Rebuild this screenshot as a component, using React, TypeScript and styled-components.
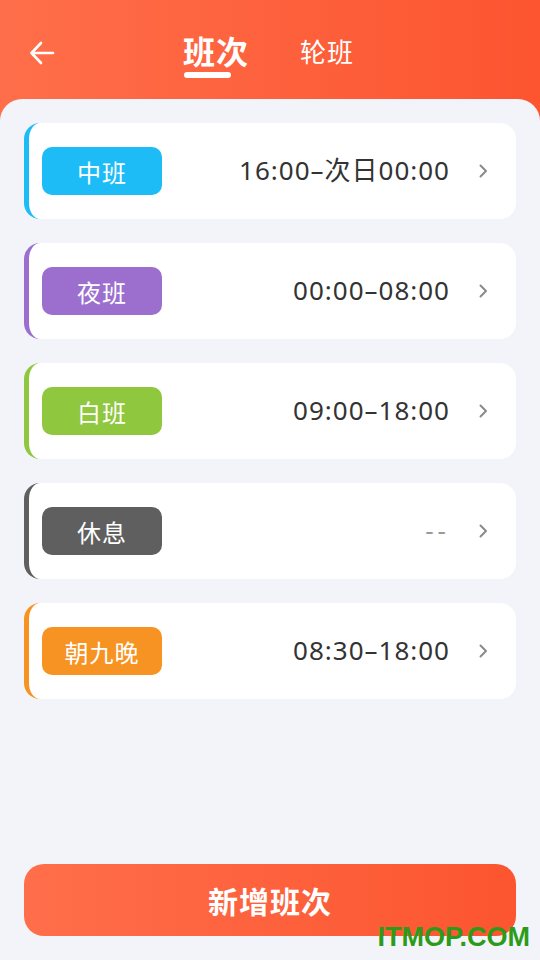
import * as React from "react"
import styled, {createGlobalStyle} from "styled-components"

const GlobalStyle = createGlobalStyle`
    html, body {
        margin: 0;
        padding: 0;
        background: #f3f4f9;
    }
    body {
        font-family: "Noto Sans CJK SC", "Noto Sans", sans-serif;
    }
`

const shifts = [
    {name: "中班", color: "#1ebcf7", time: "16:00–次日00:00"},
    {name: "夜班", color: "#9c6fcf", time: "00:00–08:00"},
    {name: "白班", color: "#8fc73e", time: "09:00–18:00"},
    {name: "休息", color: "#5f5f5f", time: "--", empty: true},
    {name: "朝九晚", color: "#f69322", time: "08:30–18:00"},
]

export default function App() {
    return (
        <Page>
            <GlobalStyle />
            <Header>
                <BackButton>
                    <svg width="26" height="24" viewBox="0 0 26 24" fill="none" stroke="#fff" strokeWidth="2.6" strokeLinecap="round" strokeLinejoin="round">
                        <path d="M24 12H3" />
                        <path d="M12 2L2.5 12L12 22" />
                    </svg>
                </BackButton>
                <Tabs>
                    <Tab $active>
                        班次
                        <TabBar />
                    </Tab>
                    <Tab>轮班</Tab>
                </Tabs>
            </Header>
            <Body>
                <List>
                    {shifts.map((item, key) => (
                        <Card key={key} $color={item.color}>
                            <Tag $color={item.color}>{item.name}</Tag>
                            <Time $empty={item.empty}>{item.time}</Time>
                            <Chevron>
                                <svg width="10" height="16" viewBox="0 0 10 16" fill="none" stroke="#8a8a8a" strokeWidth="2" strokeLinecap="round" strokeLinejoin="round">
                                    <path d="M2.5 2.5L8 8L2.5 13.5" />
                                </svg>
                            </Chevron>
                        </Card>
                    ))}
                </List>
                <AddButton>新增班次</AddButton>
            </Body>
            <Watermark>ITMOP.COM</Watermark>
        </Page>
    )
}

const Page = styled("div")`
    position: relative;
    width: 540px;
    height: 960px;
    display: flex;
    flex-direction: column;
    background: linear-gradient(90deg, #ff6e4a 0%, #fc5530 100%);
    overflow: hidden;
`
const Header = styled("div")`
    height: 99px;
    flex-shrink: 0;
    display: flex;
    align-items: flex-start;
    position: relative;
`
const BackButton = styled("div")`
    width: 26px;
    height: 24px;
    margin: 41px 0 0 29px;
    display: flex;
`
const Tabs = styled("div")`
    display: flex;
    align-items: flex-start;
    margin-left: 128px;
    margin-top: 27px;
    gap: 51px;
`
const Tab = styled("div")<{$active?: boolean}>`
    position: relative;
    color: #fff;
    font-size: ${p => (p.$active ? "32px" : "26px")};
    font-weight: ${p => (p.$active ? 700 : 400)};
    line-height: 46px;
    margin-top: ${p => (p.$active ? "0" : "1px")};
    letter-spacing: 1px;
`
const TabBar = styled("div")`
    position: absolute;
    left: 1px;
    top: 45px;
    width: 47px;
    height: 6px;
    border-radius: 3px;
    background: #fff;
`
const Body = styled("div")`
    flex: 1;
    background: #f3f4f9;
    border-radius: 22px 22px 0 0;
    display: flex;
    flex-direction: column;
    padding: 24px 24px 24px;
`
const List = styled("div")`
    flex: 1;
    display: flex;
    flex-direction: column;
    gap: 24px;
`
const Card = styled("div")<{$color: string}>`
    height: 96px;
    box-sizing: border-box;
    background: #fff;
    border-radius: 16px;
    border-left: 5px solid ${p => p.$color};
    display: flex;
    align-items: center;
    padding: 0 28px 0 13px;
`
const Tag = styled("div")<{$color: string}>`
    width: 120px;
    height: 48px;
    border-radius: 10px;
    background: ${p => p.$color};
    color: #fff;
    font-size: 24px;
    display: flex;
    align-items: center;
    justify-content: center;
    letter-spacing: 1px;
`
const Time = styled("div")<{$empty?: boolean}>`
    flex: 1;
    text-align: right;
    font-family: "Noto Sans", "Noto Sans CJK SC", sans-serif;
    font-size: 26px;
    line-height: 34px;
    margin-top: -2px;
    color: ${p => (p.$empty ? "#9a9a9a" : "#333")};
    letter-spacing: ${p => (p.$empty ? "4px" : "1px")};
    margin-right: 28px;
`
const Chevron = styled("div")`
    display: flex;
`
const AddButton = styled("div")`
    height: 72px;
    border-radius: 20px;
    background: linear-gradient(90deg, #ff6e4a 0%, #fc5530 100%);
    color: #fff;
    font-size: 30px;
    font-weight: 700;
    display: flex;
    align-items: center;
    justify-content: center;
    letter-spacing: 1px;
`
const Watermark = styled("div")`
    position: absolute;
    right: 10px;
    bottom: 7px;
    color: #2c9b1a;
    font-family: "Liberation Sans", Arial, sans-serif;
    font-weight: 700;
    font-size: 27px;
`
